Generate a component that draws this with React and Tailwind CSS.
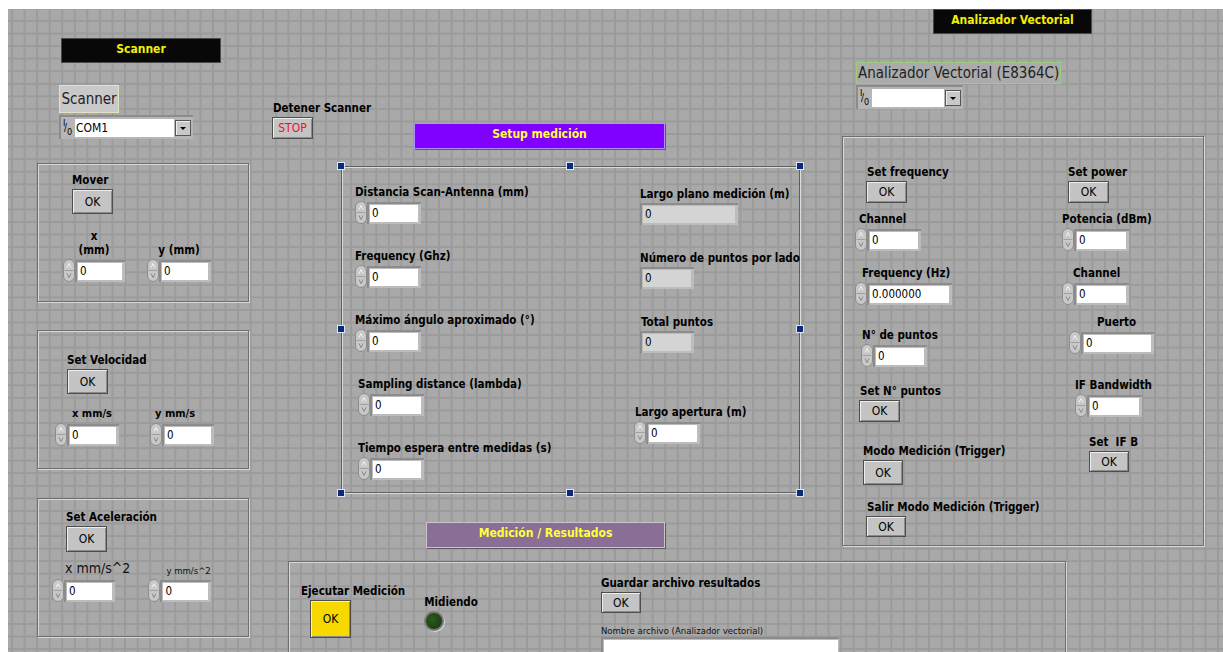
import React from 'react';

// LabVIEW-style front panel: gridded canvas, decorations and labelled controls

const Field = ({ label, className = '', labelClass = '', children }) => (
  <div className={`flex flex-col gap-[2px] ${className}`}>
    <div className={`whitespace-nowrap text-[11.5px] font-bold leading-[14px] text-black ${labelClass}`}>{label}</div>
    {children}
  </div>
);

const Spin = () => (
  <svg width="12" height="23" viewBox="0 0 12 23" className="shrink-0">
    <rect x="0.5" y="0.5" width="11" height="22" rx="5.5" fill="#c8c8c8" stroke="#8c8c8c" />
    <path d="M1.5 11.5h9" stroke="#a0a0a0" />
    <path d="M4 8.5l2-4 2 4" fill="none" stroke="#f2f2f2" />
    <path d="M4 14.5l2 4 2-4" fill="none" stroke="#8a8a8a" />
  </svg>
);

const Num = ({ value = '0', field = 'w-[48px]' }) => (
  <div className="flex items-center self-start">
    <Spin />
    <div className="border-l-2 border-t-2 border-[#8c8c8c] bg-[#bcbcbc] p-[1px] pb-[2px] pr-[3px]">
      <div className={`h-[17px] bg-white pl-[2px] text-[11.5px] leading-[17px] text-black ${field}`}>{value}</div>
    </div>
  </div>
);

const Ind = ({ field = 'w-[48px]' }) => (
  <div className="self-start border-l-2 border-t-2 border-[#8c8c8c] bg-[#bcbcbc] p-[1px] pb-[2px] pr-[3px]">
    <div className={`h-[17px] bg-[#d4d4d4] pl-[2px] text-[11.5px] leading-[17px] text-black ${field}`}>0</div>
  </div>
);

const Btn = ({ className = 'h-[22px] w-[41px]', children = 'OK', tone = 'bg-[#c4c4c4] text-black' }) => (
  <div
    className={`flex shrink-0 items-center justify-center self-start border border-[#4e4e4e] text-[12px] shadow-[inset_1px_1px_0_#ededed,inset_-1px_-1px_0_#8a8a8a] ${tone} ${className}`}
  >
    {children}
  </div>
);

const frame = 'absolute border border-[#6e6e6e] shadow-[inset_1px_1px_0_#d9d9d9,1px_1px_0_#d9d9d9]';

const Handle = ({ className }) => (
  <div className={`absolute h-[8px] w-[8px] border border-[#dfe6f5] bg-[#0b2a78] ${className}`} />
);

const IoIcon = () => (
  <div className="relative h-[18px] w-[13px] shrink-0 text-[9px] leading-none text-black">
    <span className="absolute left-[1px] top-[0px]">I</span>
    <span className="absolute left-[2px] top-[4px] text-[10px]">/</span>
    <span className="absolute left-[5px] top-[9px]">0</span>
  </div>
);

const Ring = ({ value, field }) => (
  <div className="flex items-center self-start border-l-2 border-t-2 border-[#8c8c8c] bg-[#b6b6b6] py-[2px] pl-[1px] pr-[2px]">
    <IoIcon />
    <div className={`h-[18px] bg-white pl-[1px] text-[12px] leading-[18px] text-black ${field}`}>{value}</div>
    <div className="ml-[1px] flex h-[16px] w-[16px] items-center justify-center border border-[#555] bg-[#c8c8c8] shadow-[inset_1px_1px_0_#eeeeee]">
      <span className="h-0 w-0 border-x-[3px] border-t-[3px] border-x-transparent border-t-black" />
    </div>
  </div>
);

const Title = ({ className, children }) => (
  <div className={`absolute flex justify-center text-[12px] font-bold ${className}`}>{children}</div>
);

export default function App() {
  return (
    <div className="relative h-[652px] w-[1223px] overflow-hidden bg-white font-['DejaVu_Sans_Condensed','DejaVu_Sans',sans-serif]">
      {/* panel grid */}
      <div className="absolute bottom-0 left-[8px] right-0 top-[9px] bg-[#a9a9a9] bg-[linear-gradient(to_right,#9b9b9b_2px,transparent_2px),linear-gradient(to_bottom,#9b9b9b_2px,transparent_2px)] bg-[size:12.57px_12.57px] bg-[position:3px_11px]" />

      {/* Scanner */}
      <Title className="left-[61px] top-[38px] h-[25px] w-[160px] border border-[#4a4a4a] bg-[#080808] pt-[1px] text-[#f2f000]">Scanner</Title>

      <div className="absolute left-[59px] top-[85px] flex flex-col gap-[2px]">
        <div className="flex h-[28px] w-[60px] items-center justify-center border border-[#e4e2c0] bg-[#c9c9c9] text-[15px] text-[#222]">
          Scanner
        </div>
        <Ring value="COM1" field="w-[99px]" />
      </div>

      <Field label="Detener Scanner" className="absolute left-[272px] top-[101px]" labelClass="pl-[1px]">
        <Btn tone="bg-[#c4c4c4] text-[#e8142a]">STOP</Btn>
      </Field>

      {/* Mover */}
      <div className={`${frame} left-[37px] top-[163px] h-[139px] w-[212px] pl-[25px] pt-[9px]`}>
        <Field label="Mover" className="ml-[9px]">
          <Btn className="h-[25px] w-[41px]" />
        </Field>
        <div className="mt-[15px] flex items-end gap-[22px]">
          <Field label={<>x<br />(mm)</>} className="items-center" labelClass="text-center leading-[13px]">
            <Num field="w-[44px]" />
          </Field>
          <Field label="y (mm)" className="items-center">
            <Num field="w-[46px]" />
          </Field>
        </div>
      </div>

      {/* Set Velocidad */}
      <div className={`${frame} left-[37px] top-[330px] h-[139px] w-[212px] pl-[17px] pt-[22px]`}>
        <Field label="Set Velocidad" className="ml-[12px]">
          <Btn className="h-[25px] w-[41px]" />
        </Field>
        <div className="mt-[13px] flex items-end gap-[31px]">
          <Field label="x mm/s" labelClass="ml-[17px] text-[11px]">
            <Num field="w-[46px]" />
          </Field>
          <Field label="y mm/s" labelClass="ml-[5px] text-[11px]">
            <Num field="w-[46px]" />
          </Field>
        </div>
      </div>

      {/* Set Aceleración */}
      <div className={`${frame} left-[37px] top-[498px] h-[139px] w-[212px] pl-[14px] pt-[11px]`}>
        <Field label="Set Aceleración" className="ml-[14px]">
          <Btn className="h-[26px] w-[41px]" />
        </Field>
        <div className="mt-[8px] flex items-end gap-[18px]">
          <div className="flex flex-col gap-[3px]">
            <div className="ml-[13px] whitespace-nowrap text-[14px] leading-[16px] text-[#111]">x mm/s^2</div>
            <Num field="w-[45px]" />
          </div>
          <div className="flex flex-col gap-[2px]">
            <div className="ml-[18px] whitespace-nowrap text-[9.5px] leading-[12px] text-[#111]">y mm/s^2</div>
            <Num field="w-[45px]" />
          </div>
        </div>
      </div>

      {/* Setup medición */}
      <Title className="left-[414px] top-[123px] h-[26px] w-[251px] border border-[#b58cff] bg-[#8000ff] pt-[1px] text-[#ffff40] shadow-[1px_1px_0_#5a5a5a]">
        Setup medición
      </Title>
      <div className="absolute left-[341px] top-[166px] flex h-[327px] w-[459px] border border-[#5e5e5e] pl-[13px] pt-[18px] shadow-[inset_1px_1px_0_#dcdcdc,1px_1px_0_#dcdcdc]">
        <div className="flex w-[285px] shrink-0 flex-col gap-[25px]">
          <Field label="Distancia Scan-Antenna (mm)"><Num /></Field>
          <Field label="Frequency (Ghz)"><Num /></Field>
          <Field label="Máximo ángulo aproximado (°)"><Num /></Field>
          <Field label="Sampling distance (lambda)" className="ml-[3px]"><Num /></Field>
          <Field label="Tiempo espera entre medidas (s)" className="ml-[3px]"><Num /></Field>
        </div>
        <div className="flex shrink-0 flex-col gap-[26px] pt-[2px]">
          <Field label="Largo plano medición (m)"><Ind field="w-[92px]" /></Field>
          <Field label="Número de puntos por lado"><Ind /></Field>
          <Field label="Total puntos" labelClass="pl-[1px]"><Ind /></Field>
          <Field label="Largo apertura (m)" className="-ml-[6px] mt-[26px]" labelClass="pl-[1px]"><Num /></Field>
        </div>
      </div>
      <Handle className="left-[337px] top-[162px]" />
      <Handle className="left-[566px] top-[162px]" />
      <Handle className="left-[796px] top-[162px]" />
      <Handle className="left-[337px] top-[325px]" />
      <Handle className="left-[796px] top-[325px]" />
      <Handle className="left-[337px] top-[489px]" />
      <Handle className="left-[566px] top-[489px]" />
      <Handle className="left-[796px] top-[489px]" />

      {/* Analizador vectorial */}
      <Title className="left-[933px] top-[9px] h-[25px] w-[159px] border border-[#4a4a4a] bg-[#080808] pt-[1px] text-[#f2f000]">
        Analizador Vectorial
      </Title>
      <div className="absolute left-[856px] top-[62px] flex flex-col gap-[1px]">
        <div className="flex h-[22px] w-[205px] items-center border border-[#9ccc7c] bg-[#ababab] pl-[1px] text-[15px] leading-none text-[#222]">
          Analizador Vectorial (E8364C)
        </div>
        <Ring value="" field="w-[72px]" />
      </div>

      <div className={`${frame} left-[842px] top-[136px] flex h-[410px] w-[362px] pl-[12px] pt-[28px]`}>
        <div className="flex w-[207px] shrink-0 flex-col">
          <Field label="Set frequency" labelClass="ml-[1px]" className="ml-[11px]"><Btn /></Field>
          <Field label="Channel" labelClass="ml-[4px]" className="mt-[9px]"><Num /></Field>
          <Field label="Frequency (Hz)" labelClass="ml-[7px]" className="mt-[15px]"><Num value="0.000000" field="w-[79px]" /></Field>
          <Field label="N° de puntos" labelClass="ml-[1px]" className="ml-[6px] mt-[23px]"><Num /></Field>
          <Field label="Set N° puntos" labelClass="ml-[1px]" className="ml-[4px] mt-[17px]"><Btn /></Field>
          <Field label="Modo Medición (Trigger)" className="ml-[8px] mt-[22px]"><Btn className="h-[25px] w-[40px]" /></Field>
          <Field label="Salir Modo Medición (Trigger)" labelClass="ml-[1px]" className="ml-[11px] mt-[15px]"><Btn className="h-[21px] w-[40px]" /></Field>
        </div>
        <div className="flex flex-col">
          <Field label="Set power" className="ml-[6px]"><Btn /></Field>
          <Field label="Potencia (dBm)" className="mt-[9px]"><Num field="w-[49px]" /></Field>
          <Field label="Channel" labelClass="ml-[11px]" className="mt-[15px]"><Num field="w-[49px]" /></Field>
          <Field label="Puerto" labelClass="ml-[28px]" className="ml-[7px] mt-[10px]"><Num field="w-[67px]" /></Field>
          <Field label="IF Bandwidth" className="ml-[13px] mt-[24px]"><Num field="w-[49px]" /></Field>
          <Field label={<>Set&nbsp; IF B</>} className="ml-[27px] mt-[18px]"><Btn className="h-[21px] w-[40px]" /></Field>
        </div>
      </div>

      {/* Medición / Resultados */}
      <Title className="left-[426px] top-[522px] h-[26px] w-[239px] border border-[#c8c8c8] bg-[#8a6e96] pt-[1px] text-[#ffff40] shadow-[1px_1px_0_#5a5a5a]">
        Medición / Resultados
      </Title>
      <div className={`${frame} left-[288px] top-[561px] flex h-[110px] w-[778px] pl-[12px]`}>
        <Field label="Ejecutar Medición" className="mt-[22px]">
          <Btn className="ml-[9px] h-[38px] w-[41px]" tone="bg-[#f7d900] text-black">OK</Btn>
        </Field>
        <Field label="Midiendo" className="ml-[19px] mt-[33px]">
          <div className="h-[20px] w-[20px] rounded-full border-2 border-[#7a7a7a] bg-[radial-gradient(circle_at_40%_40%,#2e5a1e,#173310)] shadow-[1px_1px_0_#d8d8d8]" />
        </Field>
        <div className="ml-[123px] mt-[14px] flex flex-col">
          <Field label="Guardar archivo resultados"><Btn className="h-[21px] w-[40px]" /></Field>
          <div className="mt-[12px] whitespace-nowrap text-[9.5px] leading-[12px] text-[#111]">
            Nombre archivo (Analizador vectorial)
          </div>
          <div className="h-[30px] w-[238px] border-l-2 border-t-2 border-[#8c8c8c] bg-[#bcbcbc] p-[1px]">
            <div className="h-full w-full bg-white" />
          </div>
        </div>
      </div>
    </div>
  );
}
